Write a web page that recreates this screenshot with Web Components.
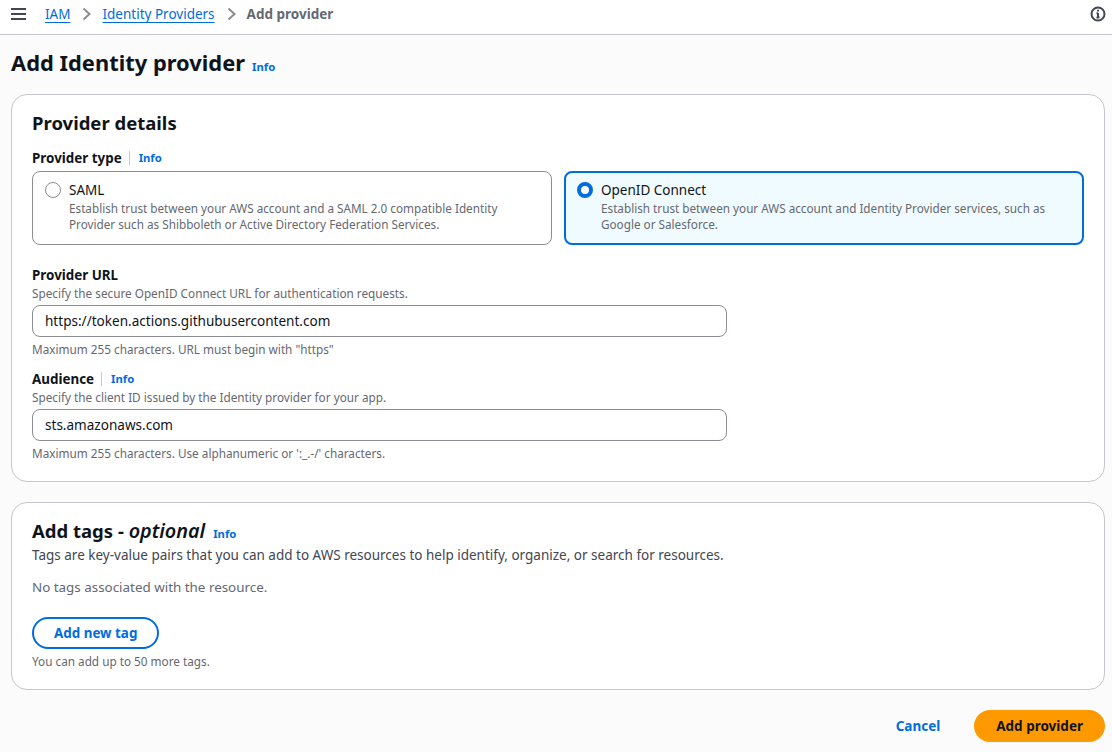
<!doctype html>
<html>
<head>
<meta charset="utf-8">
<title>Add Identity provider</title>
<style>
  html, body { margin: 0; height: 100%; }
  body {
    background: #fbfbfc;
    color: #0f141a;
    font-family: "Noto Sans", "Open Sans", sans-serif;
    font-size: 13.5px;
    overflow: hidden;
  }
</style>
</head>
<body>
<top-bar></top-bar>
<page-main>
  <page-title slot="title">Add Identity provider</page-title>

  <page-card heading="Provider details">
    <field-group label="Provider type" info>
      <div style="display:grid;grid-template-columns:1fr 1fr;gap:12px;margin-top:4px">
        <radio-card label="SAML">Establish trust between your AWS account and a SAML 2.0 compatible Identity Provider such as Shibboleth or Active Directory Federation Services.</radio-card>
        <radio-card label="OpenID Connect" checked>Establish trust between your AWS account and Identity Provider services, such as Google or Salesforce.</radio-card>
      </div>
    </field-group>
    <field-group style="margin-top:21px" label="Provider URL" description="Specify the secure OpenID Connect URL for authentication requests." value="https://token.actions.githubusercontent.com" hint="Maximum 255 characters. URL must begin with &quot;https&quot;"></field-group>
    <field-group style="margin-top:13px" label="Audience" info description="Specify the client ID issued by the Identity provider for your app." value="sts.amazonaws.com" hint="Maximum 255 characters. Use alphanumeric or ':_.-/' characters."></field-group>
  </page-card>

  <tags-card></tags-card>
  <form-actions></form-actions>
</page-main>

<script>
const infoLinkTemplate = document.createElement('template');
infoLinkTemplate.innerHTML = `
  <style>
    :host { display: inline-block; font-size: 11.3px; font-weight: 700; line-height: 16px; color: #006ce0; }
  </style>
  Info
`;

class InfoLink extends HTMLElement {
  connectedCallback() {
    if (!this.shadowRoot) {
      this.attachShadow({ mode: 'open' });
      this.shadowRoot.appendChild(infoLinkTemplate.content.cloneNode(true));
    }
  }
}

const topBarTemplate = document.createElement('template');
topBarTemplate.innerHTML = `
  <style>
    :host {
      display: flex;
      align-items: center;
      height: 34px;
      padding: 0 6px 0 11px;
      background: #fff;
      border-bottom: 1px solid #c6c6cd;
      font-size: 13.5px;
      color: #656871;
    }
    svg { display: block; flex: none; }
    .menu { margin-right: 19px; position: relative; top: -3px; }
    a, b, .sep { position: relative; top: -3px; }
    a { color: #006ce0; text-decoration: underline; text-underline-offset: 3px; }
    .sep { margin: 0 11px 0 12px; }
    b { font-weight: 700; }
    .help { margin-left: auto; position: relative; top: -3px; }
  </style>
  <svg class="menu" width="15" height="12" viewBox="0 0 15 12" fill="none" stroke="#424650" stroke-width="2">
    <path d="M0 1h15M0 6h15M0 11h15"/>
  </svg>
  <a>IAM</a>
  <svg class="sep" width="9" height="14" viewBox="0 0 9 14" fill="none" stroke="#8c8c94" stroke-width="2"><path d="M1.5 1.5l6 5.5-6 5.5"/></svg>
  <a>Identity Providers</a>
  <svg class="sep" width="9" height="14" viewBox="0 0 9 14" fill="none" stroke="#8c8c94" stroke-width="2"><path d="M1.5 1.5l6 5.5-6 5.5"/></svg>
  <b>Add provider</b>
  <svg class="help" width="16" height="16" viewBox="0 0 16 16" fill="none" stroke="#424650" stroke-width="2">
    <circle cx="8" cy="8" r="6.5"/>
    <path d="M8 7v5M6.5 11.5h3M6.5 7.2H8"/>
    <path d="M8 3.8v1.6"/>
  </svg>
`;

class TopBar extends HTMLElement {
  connectedCallback() {
    if (!this.shadowRoot) {
      this.attachShadow({ mode: 'open' });
      this.shadowRoot.appendChild(topBarTemplate.content.cloneNode(true));
    }
  }
}

const pageMainTemplate = document.createElement('template');
pageMainTemplate.innerHTML = `
  <style>
    :host { display: block; padding: 0 7px 0 11px; }
    .title { display: block; padding-top: 12px; margin-bottom: 15px; }
    .cards { display: flex; flex-direction: column; gap: 20px; }
  </style>
  <div class="title"><slot name="title"></slot></div>
  <div class="cards"><slot></slot></div>
`;

class PageMain extends HTMLElement {
  connectedCallback() {
    if (!this.shadowRoot) {
      this.attachShadow({ mode: 'open' });
      this.shadowRoot.appendChild(pageMainTemplate.content.cloneNode(true));
    }
  }
}

const pageTitleTemplate = document.createElement('template');
pageTitleTemplate.innerHTML = `
  <style>
    :host { display: flex; align-items: baseline; gap: 7px; }
    h1 { margin: 0; font-size: 21.9px; line-height: 32px; font-weight: 700; color: #0f141a; }
  </style>
  <h1><slot></slot></h1>
  <info-link></info-link>
`;

class PageTitle extends HTMLElement {
  connectedCallback() {
    if (!this.shadowRoot) {
      this.attachShadow({ mode: 'open' });
      this.shadowRoot.appendChild(pageTitleTemplate.content.cloneNode(true));
    }
  }
}

const pageCardTemplate = document.createElement('template');
pageCardTemplate.innerHTML = `
  <style>
    :host {
      display: block;
      box-sizing: border-box;
      background: #fff;
      border: 1px solid #c6c6cd;
      border-radius: 16px;
      padding: 15px 20px 20px;
    }
    h2 { margin: 0 0 13px; font-size: 18.5px; line-height: 26px; font-weight: 700; color: #0f141a; }
  </style>
  <h2></h2>
  <slot></slot>
`;

class PageCard extends HTMLElement {
  connectedCallback() {
    if (!this.shadowRoot) {
      this.attachShadow({ mode: 'open' });
      this.shadowRoot.appendChild(pageCardTemplate.content.cloneNode(true));
      this.shadowRoot.querySelector('h2').textContent = this.getAttribute('heading');
    }
  }
}

const fieldGroupTemplate = document.createElement('template');
fieldGroupTemplate.innerHTML = `
  <style>
    :host { display: block; }
    .label { display: flex; align-items: center; height: 18px; font-size: 13.4px; font-weight: 700; line-height: 18px; color: #0f141a; }
    .divider { width: 1px; height: 14px; background: #c6c6cd; margin: 0 9px 0 7px; }
    .desc, .hint { font-size: 11.75px; line-height: 16px; color: #656871; }
    .desc { margin-top: 1px; }
    .hint { margin-top: 4px; }
    .input {
      box-sizing: border-box;
      height: 32px;
      width: 695px;
      margin-top: 4px;
      padding: 0 12px;
      background: #fff;
      border: 1px solid #8c8c94;
      border-radius: 8px;
      font-size: 13.55px;
      line-height: 30px;
      color: #0f141a;
    }
    [hidden] { display: none; }
  </style>
  <div class="label"><span class="text"></span><span class="divider" hidden></span><info-link hidden></info-link></div>
  <div class="desc" hidden></div>
  <div class="input" hidden></div>
  <div class="hint" hidden></div>
  <slot></slot>
`;

class FieldGroup extends HTMLElement {
  connectedCallback() {
    if (this.shadowRoot) return;
    this.attachShadow({ mode: 'open' });
    this.shadowRoot.appendChild(fieldGroupTemplate.content.cloneNode(true));
    const root = this.shadowRoot;
    root.querySelector('.text').textContent = this.getAttribute('label');
    if (this.hasAttribute('info')) {
      root.querySelector('.divider').hidden = false;
      root.querySelector('info-link').hidden = false;
    }
    [['description', '.desc'], ['value', '.input'], ['hint', '.hint']].forEach(([attr, selector]) => {
      if (this.hasAttribute(attr)) {
        const el = root.querySelector(selector);
        el.textContent = this.getAttribute(attr);
        el.hidden = false;
      }
    });
  }
}

const radioCardTemplate = document.createElement('template');
radioCardTemplate.innerHTML = `
  <style>
    :host {
      display: grid;
      grid-template-columns: 16px 1fr;
      column-gap: 8px;
      box-sizing: border-box;
      height: 74px;
      padding: 8px 12px 0 12px;
      background: #fff;
      border: 1px solid #8c8c94;
      border-radius: 8px;
    }
    :host([checked]) {
      background: #f0fbff;
      border: 2px solid #006ce0;
      padding: 7px 12px 0 11px;
    }
    .dot { box-sizing: border-box; width: 16px; height: 16px; margin-top: 2px; border: 1px solid #8c8c94; border-radius: 50%; background: #fff; }
    :host([checked]) .dot { border: 4.5px solid #006ce0; }
    .label { font-size: 13.5px; line-height: 20px; color: #0f141a; }
    .desc { font-size: 11.72px; line-height: 16px; color: #656871; }
  </style>
  <span class="dot"></span>
  <div>
    <div class="label"></div>
    <div class="desc"><slot></slot></div>
  </div>
`;

class RadioCard extends HTMLElement {
  connectedCallback() {
    if (!this.shadowRoot) {
      this.attachShadow({ mode: 'open' });
      this.shadowRoot.appendChild(radioCardTemplate.content.cloneNode(true));
      this.shadowRoot.querySelector('.label').textContent = this.getAttribute('label');
    }
  }
}

const tagsCardTemplate = document.createElement('template');
tagsCardTemplate.innerHTML = `
  <style>
    :host {
      display: block;
      box-sizing: border-box;
      height: 188px;
      background: #fff;
      border: 1px solid #c6c6cd;
      border-radius: 16px;
      padding: 15px 20px 0;
    }
    .head { display: flex; align-items: baseline; gap: 8px; }
    h2 { margin: 0; font-size: 18.5px; line-height: 26px; font-weight: 700; color: #0f141a; }
    em { font-style: italic; font-weight: 600; font-size: 19.8px; }
    .desc { font-size: 13.5px; line-height: 20px; color: #424650; margin-top: 1px; }
    .empty { font-size: 13.4px; line-height: 20px; color: #656871; margin-top: 12px; }
    .btn {
      display: inline-block;
      box-sizing: border-box;
      height: 32px;
      margin-top: 20px;
      padding: 0 20px;
      border: 2px solid #006ce0;
      border-radius: 16px;
      font-size: 13.4px;
      font-weight: 700;
      line-height: 28px;
      color: #006ce0;
    }
    .hint { font-size: 11.75px; line-height: 16px; color: #656871; margin-top: 4px; }
  </style>
  <div class="head"><h2>Add tags - <em>optional</em></h2><info-link></info-link></div>
  <div class="desc">Tags are key-value pairs that you can add to AWS resources to help identify, organize, or search for resources.</div>
  <div class="empty">No tags associated with the resource.</div>
  <div class="btn">Add new tag</div>
  <div class="hint">You can add up to 50 more tags.</div>
`;

class TagsCard extends HTMLElement {
  connectedCallback() {
    if (!this.shadowRoot) {
      this.attachShadow({ mode: 'open' });
      this.shadowRoot.appendChild(tagsCardTemplate.content.cloneNode(true));
    }
  }
}

const formActionsTemplate = document.createElement('template');
formActionsTemplate.innerHTML = `
  <style>
    :host { display: flex; justify-content: flex-end; align-items: center; gap: 34px; margin-top: 0; padding-bottom: 10px; font-size: 13.5px; font-weight: 700; }
    .cancel { color: #006ce0; line-height: 20px; }
    .primary {
      box-sizing: border-box;
      height: 32px;
      padding: 0 22px;
      border-radius: 16px;
      background: #ff9900;
      color: #0f141a;
      line-height: 32px;
    }
  </style>
  <span class="cancel">Cancel</span>
  <span class="primary">Add provider</span>
`;

class FormActions extends HTMLElement {
  connectedCallback() {
    if (!this.shadowRoot) {
      this.attachShadow({ mode: 'open' });
      this.shadowRoot.appendChild(formActionsTemplate.content.cloneNode(true));
    }
  }
}

customElements.define('info-link', InfoLink);
customElements.define('top-bar', TopBar);
customElements.define('page-main', PageMain);
customElements.define('page-title', PageTitle);
customElements.define('page-card', PageCard);
customElements.define('field-group', FieldGroup);
customElements.define('radio-card', RadioCard);
customElements.define('tags-card', TagsCard);
customElements.define('form-actions', FormActions);
</script>
</body>
</html>
